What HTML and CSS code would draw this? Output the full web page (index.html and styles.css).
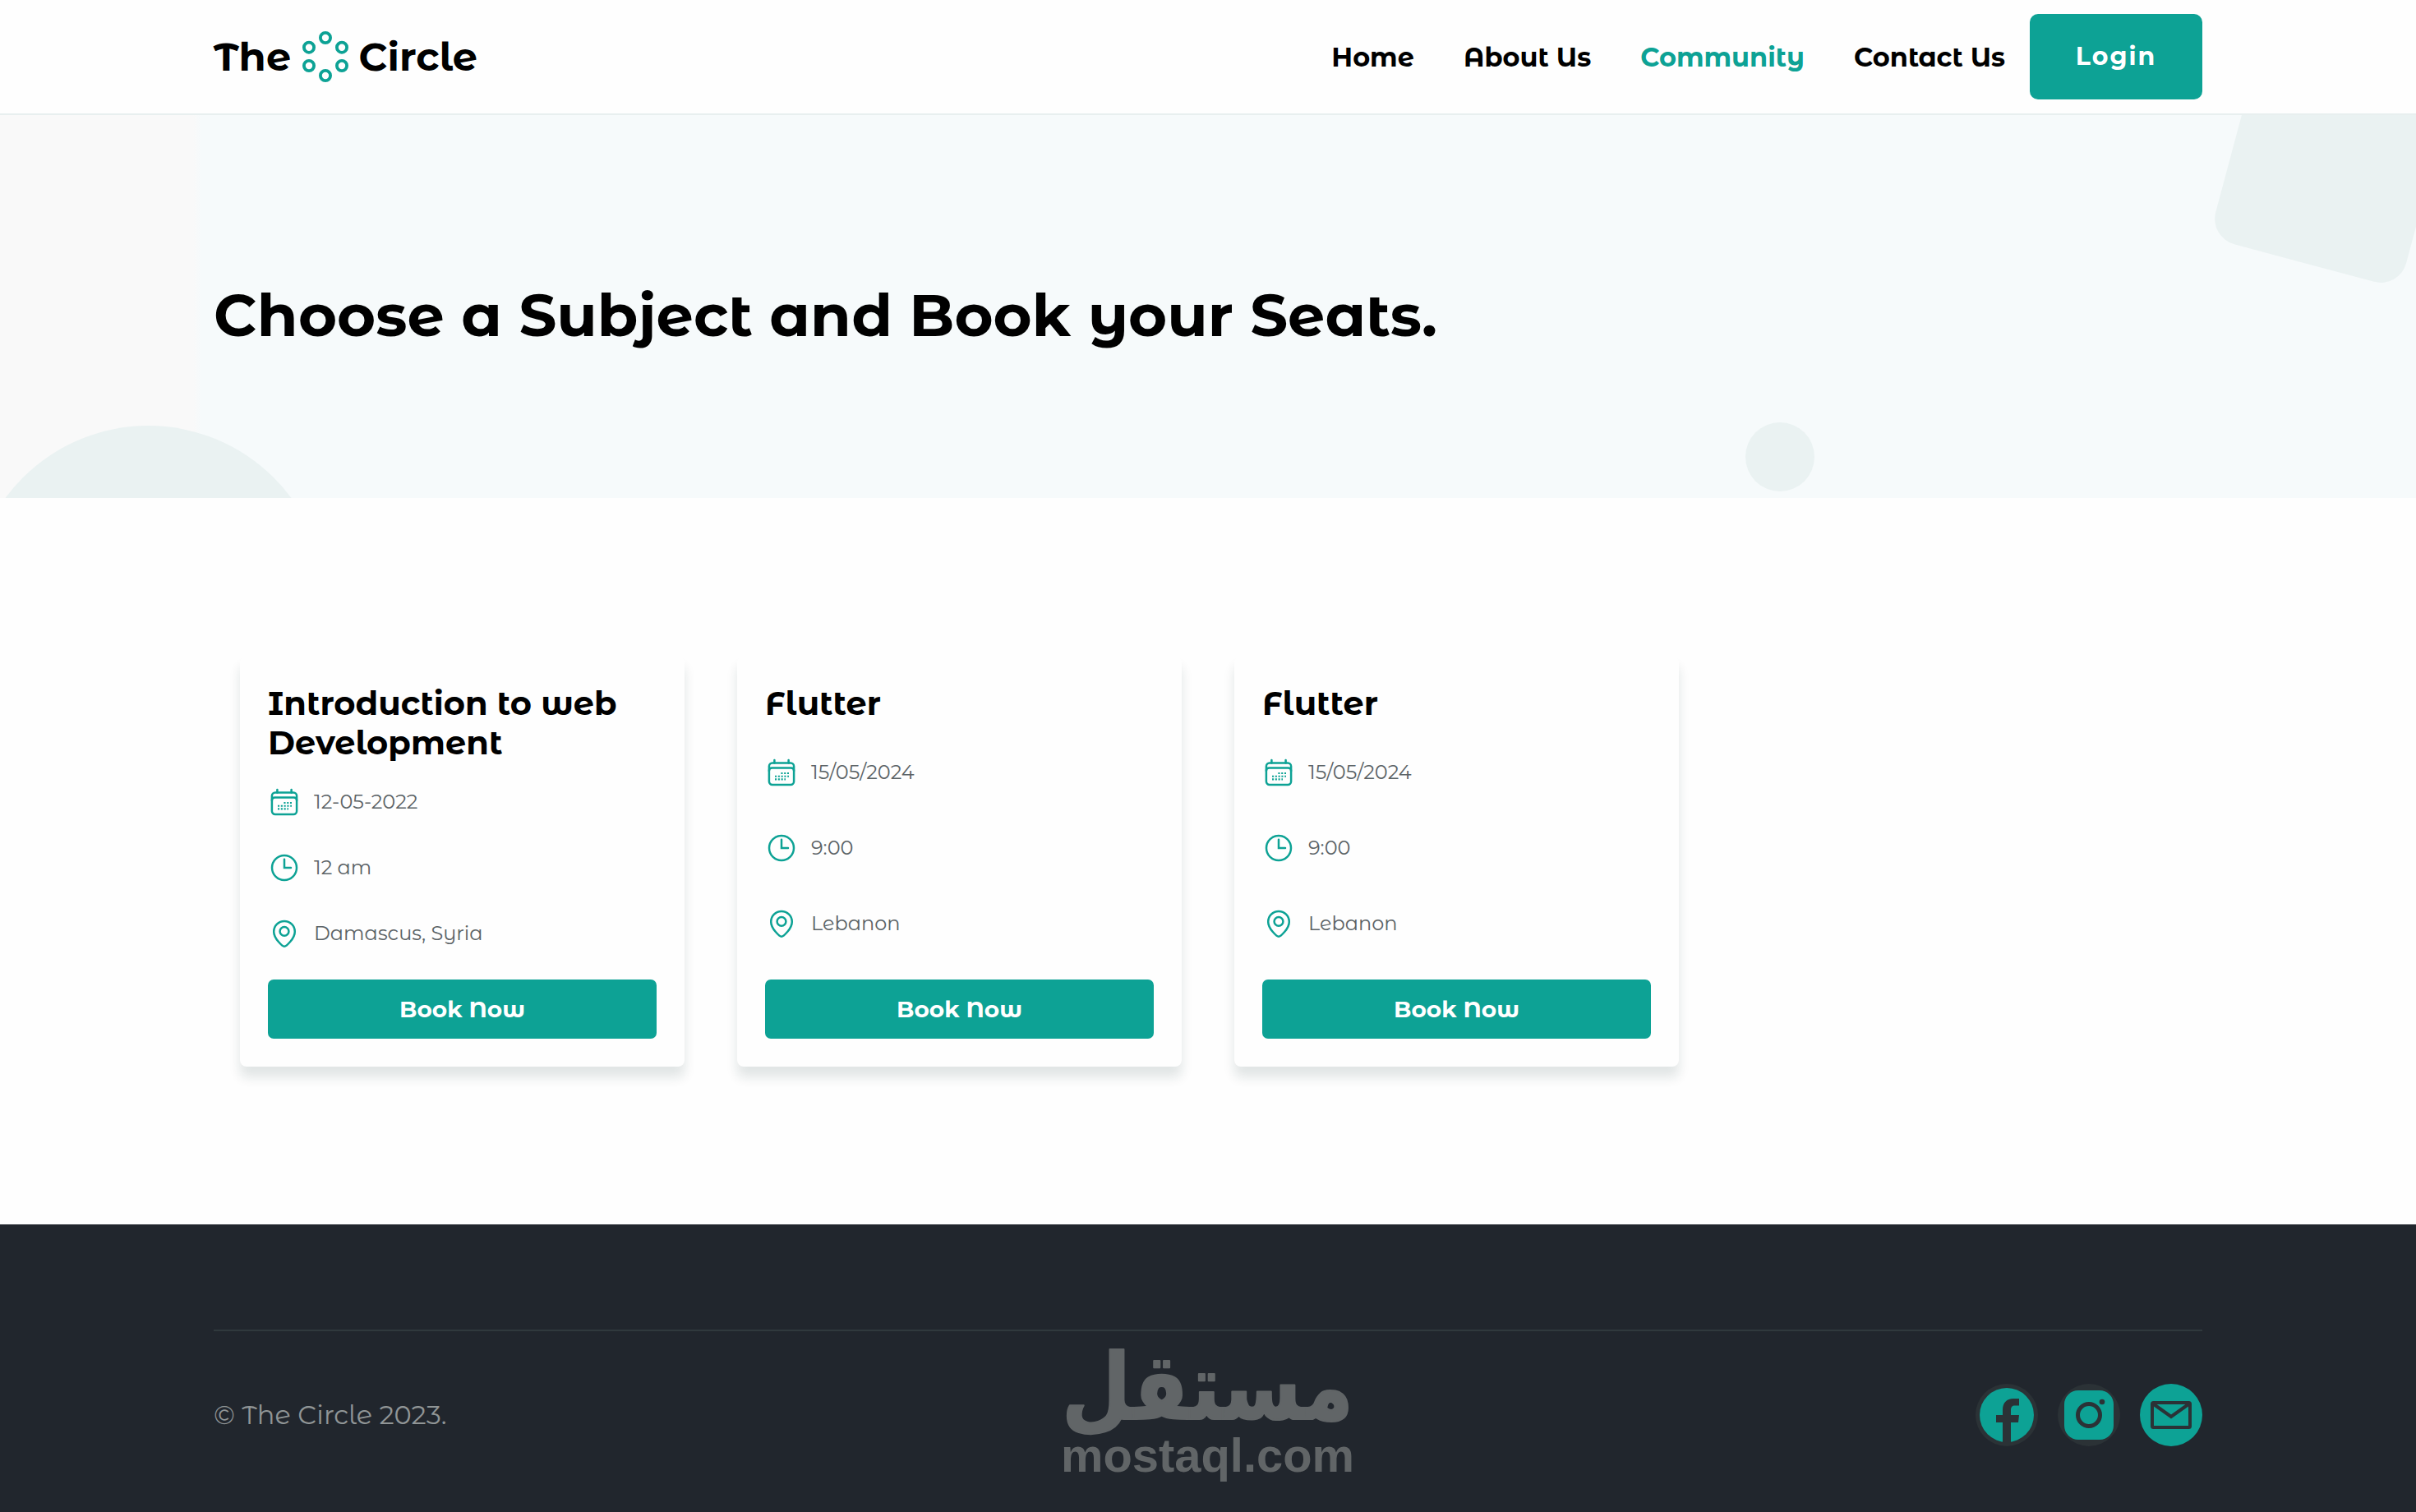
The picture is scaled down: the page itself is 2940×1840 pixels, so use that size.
FILE: index.html
```html
<!DOCTYPE html>
<html lang="en">
<head>
    <meta charset="UTF-8">
    <meta name="viewport" content="width=device-width, initial-scale=1.0">
    <title>The Circle</title>
    <link rel="stylesheet" href="styles.css">
</head>
<body>
    <svg class="sprite" aria-hidden="true">
        <symbol id="icon-calendar" viewBox="0 0 40 40">
            <rect x="4.9" y="8.4" width="30.2" height="26.6" rx="4"/>
            <path d="M4.9 18Q4.9 14.4 8.5 14.4H31.5Q35.1 14.4 35.1 18M11.4 5V8.4M28.6 5V8.4"/>
            <path class="dots" d="M19.4 21h9.6M12 24.7h17M12 28.4h13"/>
        </symbol>
        <symbol id="icon-clock" viewBox="0 0 40 40">
            <circle cx="20" cy="20" r="15"/>
            <path d="M20 9.8V20H28"/>
        </symbol>
        <symbol id="icon-pin" viewBox="0 0 40 40">
            <path d="M20 35.8C18 35.8 7.2 26.5 7.2 17.7A12.8 12.8 0 0 1 32.8 17.7C32.8 26.5 22 35.8 20 35.8Z"/>
            <circle cx="20" cy="17.4" r="5.4"/>
        </symbol>
    </svg>

    <header class="header">
        <div class="container header-inner">
            <a class="logo">
                <span>The</span>
                <svg class="logo-mark" viewBox="0 0 56 62">
                    <circle cx="28" cy="8" r="6.1"/>
                    <circle cx="8" cy="19.7" r="6.1"/>
                    <circle cx="48" cy="19.7" r="6.1"/>
                    <circle cx="8" cy="42" r="6.1"/>
                    <circle cx="48" cy="42" r="6.1"/>
                    <circle cx="28" cy="54" r="6.1"/>
                </svg>
                <span>Circle</span>
            </a>
            <nav class="nav">
                <a class="nav-link">Home</a>
                <a class="nav-link">About Us</a>
                <a class="nav-link active">Community</a>
                <a class="nav-link">Contact Us</a>
                <a class="login">Login</a>
            </nav>
        </div>
    </header>

    <section class="hero">
        <svg class="hero-shapes" viewBox="0 0 2940 466">
            <rect x="2688" y="-91" width="240" height="240" rx="32" transform="rotate(15 2688 149)"/>
            <circle cx="180.5" cy="594" r="216"/>
            <circle cx="2166" cy="416" r="42"/>
        </svg>
        <div class="container">
            <h1>Choose a Subject and Book your Seats.</h1>
        </div>
    </section>

    <main class="container events">
        <article class="card">
            <div class="card-body">
                <h2>Introduction to web Development</h2>
                <p class="info"><svg><use href="#icon-calendar"/></svg><span>12-05-2022</span></p>
                <p class="info"><svg><use href="#icon-clock"/></svg><span>12 am</span></p>
                <p class="info"><svg><use href="#icon-pin"/></svg><span>Damascus, Syria</span></p>
            </div>
            <button class="book">Book Now</button>
        </article>
        <article class="card">
            <div class="card-body">
                <h2>Flutter</h2>
                <p class="info"><svg><use href="#icon-calendar"/></svg><span>15/05/2024</span></p>
                <p class="info"><svg><use href="#icon-clock"/></svg><span>9:00</span></p>
                <p class="info"><svg><use href="#icon-pin"/></svg><span>Lebanon</span></p>
            </div>
            <button class="book">Book Now</button>
        </article>
        <article class="card">
            <div class="card-body">
                <h2>Flutter</h2>
                <p class="info"><svg><use href="#icon-calendar"/></svg><span>15/05/2024</span></p>
                <p class="info"><svg><use href="#icon-clock"/></svg><span>9:00</span></p>
                <p class="info"><svg><use href="#icon-pin"/></svg><span>Lebanon</span></p>
            </div>
            <button class="book">Book Now</button>
        </article>
    </main>

    <footer class="footer">
        <div class="container">
            <div class="footer-row">
                <p>© The Circle 2023.</p>
                <div class="social">
                    <!-- facebook -->
                    <svg viewBox="0 0 76 76">
                        <circle class="ring" cx="38" cy="38" r="38"/>
                        <circle class="fill" cx="38" cy="38" r="33"/>
                        <path class="ring" d="M33 72V47H25V38H33V32C33 23 38 18 46 18H53V26.5H48C44.5 26.5 43 28.5 43 32V38H53L52 47H43V72Z"/>
                    </svg>
                    <!-- instagram -->
                    <svg viewBox="0 0 76 76">
                        <circle class="ring" cx="38" cy="38" r="38"/>
                        <rect class="fill" x="8" y="8" width="60" height="60" rx="17"/>
                        <circle class="line" cx="38" cy="38" r="13.5"/>
                        <circle class="ring" cx="54" cy="22" r="3.3"/>
                    </svg>
                    <!-- email -->
                    <svg viewBox="0 0 76 76">
                        <circle class="fill" cx="38" cy="38" r="38"/>
                        <rect class="line thin" x="15" y="23" width="46" height="30" rx="1.5"/>
                        <path class="line thin" d="M17 25L38 40L59 25"/>
                    </svg>
                </div>
            </div>
        </div>
    </footer>

    <svg class="watermark" viewBox="0 0 360 170">
        <text class="wm-ar" x="0" y="0" transform="translate(2 91) scale(1 1.12)" textLength="355" lengthAdjust="spacingAndGlyphs">مستقل</text>
        <text class="wm-en" x="1" y="155" textLength="357" lengthAdjust="spacingAndGlyphs">mostaql.com</text>
    </svg>
</body>
</html>
```
FILE: styles.css
```css
* {
    margin: 0;
    padding: 0;
    box-sizing: border-box;
}
body {
    position: relative;
    height: 1840px;
    overflow: hidden;
    display: flex;
    flex-direction: column;
    font-family: "Montserrat Alternates", Inter, sans-serif;
    background-color: #fefefe;
    color: #000;
}
.sprite {
    position: absolute;
    width: 0;
    height: 0;
}
.container {
    width: 2420px;
    margin: 0 auto;
}

/* header */
.header {
    height: 140px;
    border-bottom: 2px solid #e8efef;
}
.header-inner {
    height: 138px;
    display: flex;
    justify-content: space-between;
    align-items: center;
}
.logo {
    display: flex;
    align-items: center;
    gap: 13px;
    font-size: 48px;
    font-weight: 700;
}
.logo-mark {
    width: 56px;
    height: 62px;
    margin-left: 1px;
    margin-right: -1px;
    fill: none;
    stroke: #0da295;
    stroke-width: 3.8;
}
.nav {
    display: flex;
    align-items: center;
}
.nav-link {
    padding: 0 30px;
    font-size: 32px;
    font-weight: 700;
}
.nav-link.active {
    color: #0da295;
}
.login {
    width: 210px;
    height: 104px;
    padding-bottom: 2px;
    display: flex;
    justify-content: center;
    align-items: center;
    border-radius: 10px;
    background-color: #0da295;
    color: #fff;
    font-size: 30px;
    font-weight: 700;
    letter-spacing: 2px;
}

/* hero */
.hero {
    position: relative;
    height: 466px;
    padding-top: 199px;
    background: linear-gradient(90deg, #f9f9f9 235px, #f6fafb 245px);
}
.hero-shapes {
    position: absolute;
    top: 0;
    left: 0;
    width: 2940px;
    height: 466px;
    fill: #eaf2f2;
}
.hero h1 {
    position: relative;
    font-size: 72px;
    line-height: 88px;
    font-weight: 700;
}

/* cards */
.events {
    flex: 1;
    display: grid;
    grid-template-columns: repeat(4, 1fr);
    align-items: start;
    padding-top: 192px;
}
.card {
    height: 500px;
    margin: 0 32px;
    padding: 34px;
    display: flex;
    flex-direction: column;
    gap: 8px;
    border-radius: 8px;
    background-color: #fefefe;
    box-shadow: 0 13px 14px rgba(20, 50, 50, 0.12);
}
.card-body {
    height: 352px;
    display: flex;
    flex-direction: column;
    justify-content: space-between;
}
.card-body::after {
    content: "";
}
.card h2 {
    font-size: 40px;
    line-height: 48px;
    font-weight: 700;
}
.info {
    height: 64px;
    display: flex;
    align-items: center;
    gap: 16px;
    font-size: 24px;
    color: #5b6366;
}
.info span {
    padding-bottom: 2px;
}
.info svg {
    width: 40px;
    height: 40px;
    fill: none;
    stroke: #0da295;
    stroke-width: 2.5;
    stroke-linecap: round;
}
.dots {
    stroke-width: 2.1;
    stroke-linecap: butt;
    stroke-dasharray: 2.1 1.7;
}
.book {
    height: 72px;
    border: none;
    border-radius: 7px;
    background-color: #0da295;
    color: #fff;
    font-family: inherit;
    font-size: 28px;
    font-weight: 700;
}

/* footer */
.footer {
    height: 350px;
    padding-top: 128px;
    background-color: #21262d;
}
.footer-row {
    border-top: 2px solid #30393d;
    padding-top: 64px;
    display: flex;
    justify-content: space-between;
    align-items: center;
    font-size: 32px;
    color: #909596;
}
.footer-row p {
    padding-bottom: 2px;
}
.social {
    display: flex;
    gap: 24px;
}
.social svg {
    width: 76px;
    height: 76px;
}
.ring {
    fill: #2b3236;
}
.fill {
    fill: #0da295;
}
.line {
    fill: none;
    stroke: #2b3236;
    stroke-width: 5;
}
.thin {
    stroke-width: 4;
}

/* watermark over the footer */
.watermark {
    position: absolute;
    left: 1290px;
    bottom: 34px;
    width: 360px;
    height: 170px;
    overflow: visible;
    fill: #616567;
}
.wm-ar {
    font: 700 100px "DejaVu Sans", sans-serif;
    stroke: #616567;
    stroke-width: 2;
    stroke-linejoin: round;
}
.wm-en {
    font: 700 58px "Liberation Sans", sans-serif;
}
```
